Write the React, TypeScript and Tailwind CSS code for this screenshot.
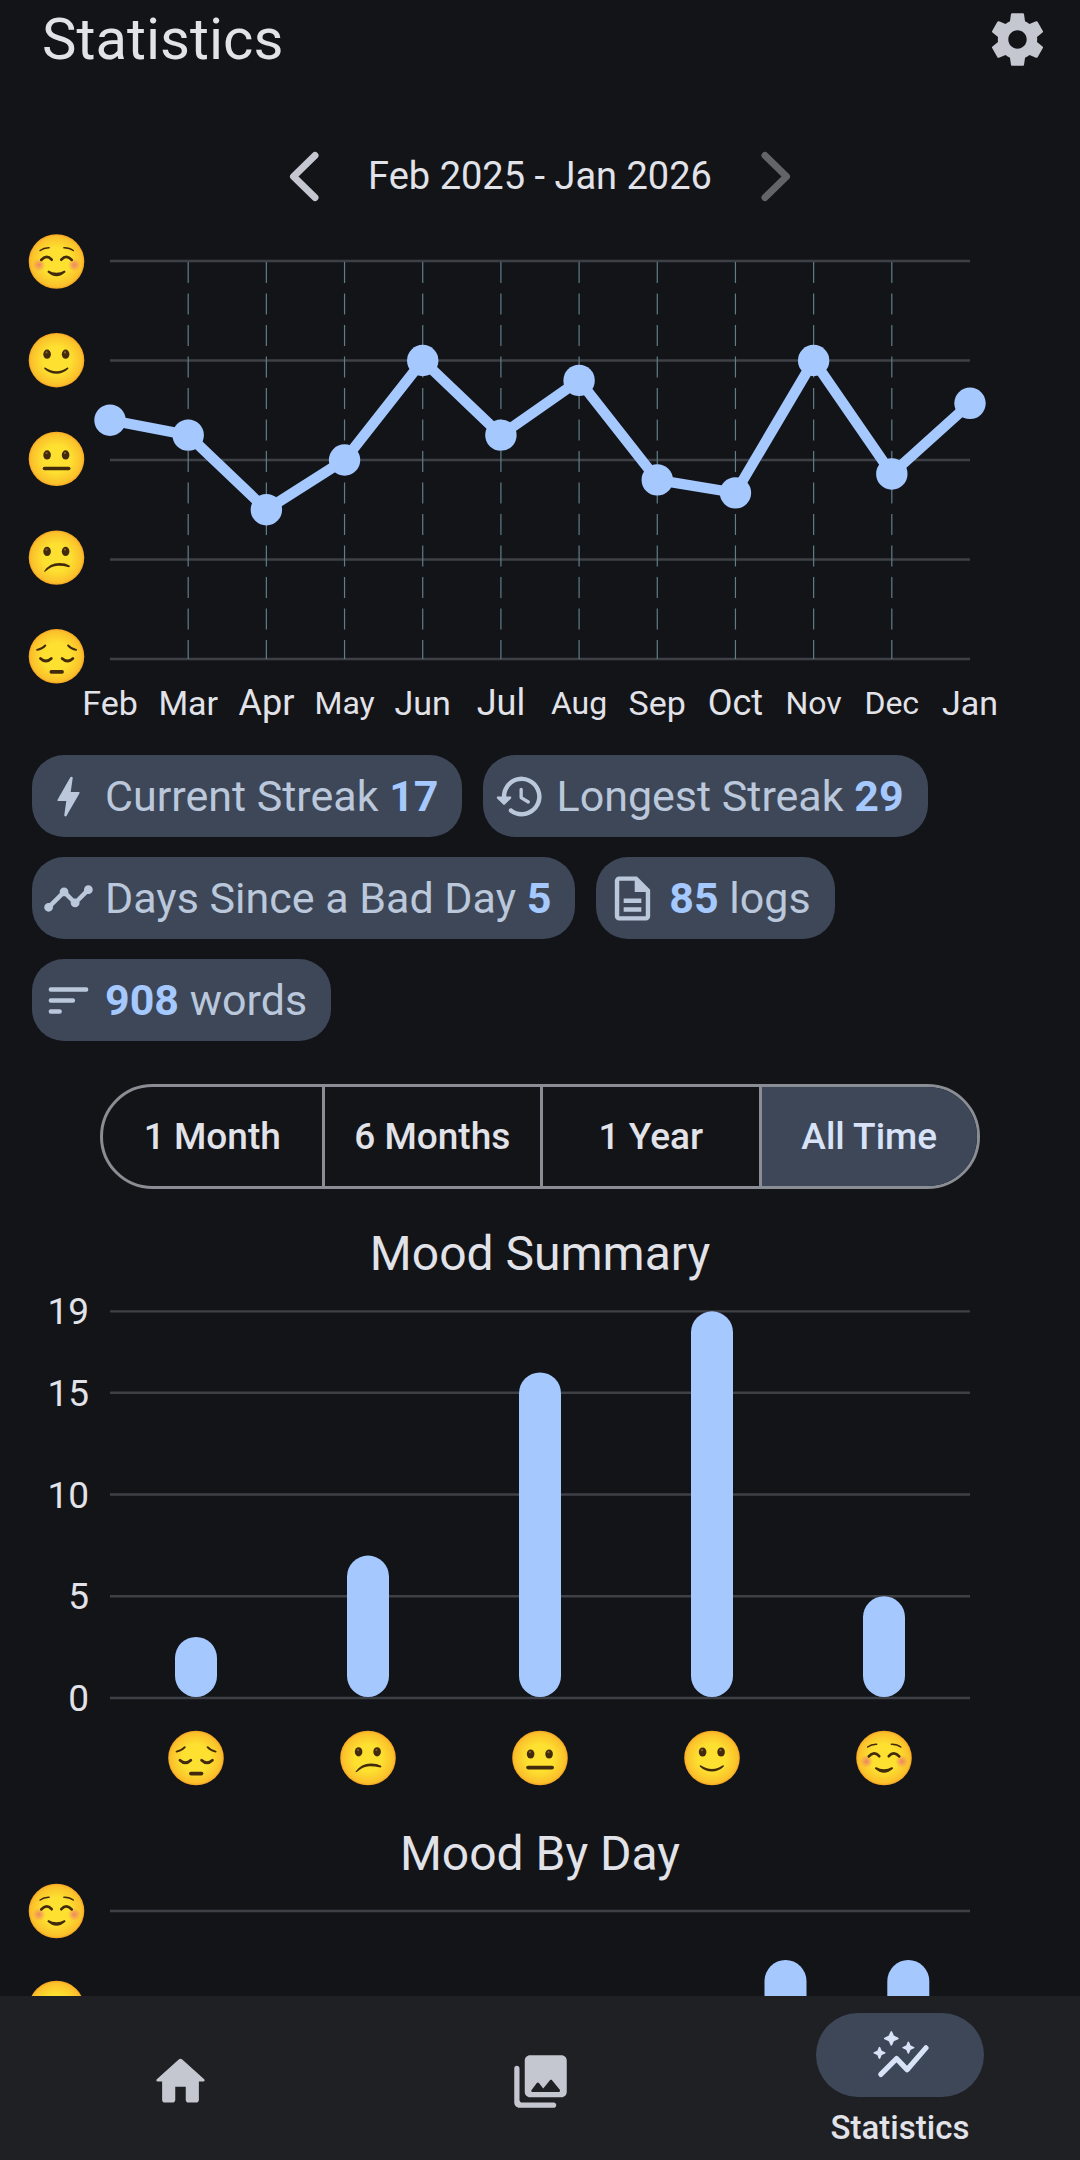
import React, { useState } from "react";

type Mood = "happy" | "smile" | "neutral" | "confused" | "sad";

interface FaceProps {
  mood: Mood;
  x: number;
  y: number;
}

const PRIMARY = "#a5c8ff";
const GRID = "#3e4045";
const INK = "#422b0d";

// plot area shared by every chart, in svg units
const LEFT = 110;
const RIGHT = 970;

const MONTHS = [
  { label: "Feb", value: 3.4, size: "text-[34px]" },
  { label: "Mar", value: 3.25, size: "text-[34px]" },
  { label: "Apr", value: 2.5, size: "text-[36px]" },
  { label: "May", value: 3, size: "text-[32px]" },
  { label: "Jun", value: 4, size: "text-[34px]" },
  { label: "Jul", value: 3.25, size: "text-[36px]" },
  { label: "Aug", value: 3.8, size: "text-[32px]" },
  { label: "Sep", value: 2.8, size: "text-[34px]" },
  { label: "Oct", value: 2.67, size: "text-[36px]" },
  { label: "Nov", value: 4, size: "text-[32px]" },
  { label: "Dec", value: 2.86, size: "text-[32px]" },
  { label: "Jan", value: 3.57, size: "text-[34px]" },
];

const MOODS: Mood[] = ["happy", "smile", "neutral", "confused", "sad"];

const SUMMARY: { mood: Mood; count: number }[] = [
  { mood: "sad", count: 3 },
  { mood: "confused", count: 7 },
  { mood: "neutral", count: 16 },
  { mood: "smile", count: 19 },
  { mood: "happy", count: 5 },
];

const RANGES = ["1 Month", "6 Months", "1 Year", "All Time"];

const ICONS = {
  settings:
    "M19.43 12.98c.04-.32.07-.64.07-.98s-.03-.66-.07-.98l2.11-1.65c.19-.15.24-.42.12-.64l-2-3.46c-.12-.22-.39-.3-.61-.22l-2.49 1c-.52-.4-1.08-.73-1.69-.98l-.38-2.65C14.46 2.18 14.25 2 14 2h-4c-.25 0-.46.18-.49.42l-.38 2.65c-.61.25-1.17.59-1.69.98l-2.49-1c-.23-.09-.49 0-.61.22l-2 3.46c-.13.22-.07.49.12.64l2.11 1.65c-.04.32-.07.65-.07.98s.03.66.07.98l-2.11 1.65c-.19.15-.24.42-.12.64l2 3.46c.12.22.39.3.61.22l2.49-1c.52.4 1.08.73 1.69.98l.38 2.65c.03.24.24.42.49.42h4c.25 0 .46-.18.49-.42l.38-2.65c.61-.25 1.17-.59 1.69-.98l2.49 1c.23.09.49 0 .61-.22l2-3.46c.12-.22.07-.49-.12-.64l-2.11-1.65zM12 15.5c-1.93 0-3.5-1.57-3.5-3.5s1.57-3.5 3.5-3.5 3.5 1.57 3.5 3.5-1.57 3.5-3.5 3.5z",
  bolt: "M10.67 21c-.35 0-.62-.31-.57-.66L11 14H7.5c-.88 0-.33-.75-.31-.78 1.26-2.23 3.15-5.53 5.65-9.93.1-.18.3-.29.5-.29.35 0 .62.31.57.66L13.01 10h3.51c.4 0 .62.19.4.66-3.29 5.74-5.2 9.09-5.75 10.05-.1.18-.29.29-.5.29z",
  history:
    "M13.26 3C8.17 2.86 4 6.95 4 12H2.21c-.45 0-.67.54-.35.85l2.79 2.8c.2.2.51.2.71 0l2.79-2.8c.31-.31.09-.85-.36-.85H6c0-3.9 3.18-7.05 7.1-7 3.72.05 6.85 3.18 6.9 6.9.05 3.91-3.1 7.1-7 7.1-1.61 0-3.1-.55-4.28-1.48-.4-.31-.96-.28-1.32.08-.42.42-.39 1.13.08 1.49C9 20.29 10.91 21 13 21c5.05 0 9.14-4.17 9-9.26-.13-4.69-4.05-8.61-8.74-8.74zm-.51 5c-.41 0-.75.34-.75.75v3.68c0 .35.19.68.49.86l3.12 1.85c.36.21.82.09 1.03-.26.21-.36.09-.82-.26-1.03l-2.88-1.71v-3.4c0-.4-.34-.74-.75-.74z",
  timeline:
    "M23 8c0 1.1-.9 2-2 2-.18 0-.35-.02-.51-.07l-3.56 3.55c.05.16.07.34.07.52 0 1.1-.9 2-2 2s-2-.9-2-2c0-.18.02-.36.07-.52l-2.55-2.55c-.16.05-.34.07-.52.07s-.36-.02-.52-.07l-4.55 4.56c.05.16.07.33.07.51 0 1.1-.9 2-2 2s-2-.9-2-2 .9-2 2-2c.18 0 .35.02.51.07l4.56-4.55C8.02 9.36 8 9.18 8 9c0-1.1.9-2 2-2s2 .9 2 2c0 .18-.02.36-.07.52l2.55 2.55c.16-.05.34-.07.52-.07s.36.02.52.07l3.55-3.56C19.02 8.35 19 8.18 19 8c0-1.1.9-2 2-2s2 .9 2 2z",
  document:
    "M8 16h8v2H8zm0-4h8v2H8zm6-10H6c-1.1 0-2 .9-2 2v16c0 1.1.89 2 1.99 2H18c1.1 0 2-.9 2-2V8l-6-6zm4 18H6V4h7v5h5v11z",
  sort: "M4 6h16a1 1 0 0 1 0 2H4a1 1 0 0 1 0-2zM4 11h10a1 1 0 0 1 0 2H4a1 1 0 0 1 0-2zM4 16h4a1 1 0 0 1 0 2H4a1 1 0 0 1 0-2z",
  home: "M10 19v-5h4v5c0 .55.45 1 1 1h3c.55 0 1-.45 1-1v-7h1.7c.46 0 .68-.57.33-.87L12.67 3.6c-.38-.34-.96-.34-1.34 0l-8.36 7.53c-.34.3-.13.87.33.87H5v7c0 .55.45 1 1 1h3c.55 0 1-.45 1-1z",
  gallery:
    "M22 16V4c0-1.1-.9-2-2-2H8c-1.1 0-2 .9-2 2v12c0 1.1.9 2 2 2h12c1.1 0 2-.9 2-2zm-10.6-3.47l1.63 2.18 2.58-3.22c.2-.25.58-.25.78 0l2.96 3.7c.26.33.03.81-.39.81H9c-.41 0-.65-.47-.4-.8l2-2.67c.2-.26.6-.26.8.01zM2 7v13c0 1.1.9 2 2 2h13c.55 0 1-.45 1-1s-.45-1-1-1H5c-.55 0-1-.45-1-1V7c0-.55-.45-1-1-1s-1 .45-1 1z",
};

const Icon = ({ name, className }: { name: keyof typeof ICONS; className: string }) => (
  <svg viewBox="0 0 24 24" fill="currentColor" className={className} aria-hidden="true">
    <path d={ICONS[name]} />
  </svg>
);

const Eyes = ({ y }: { y: number }) => (
  <>
    {[-9.4, 9.1].map((x) => (
      <g key={x}>
        <ellipse cx={x} cy={y} rx="3.8" ry="4.6" fill={INK} />
        <circle cx={x - 0.6} cy={y - 1.8} r="1.1" fill="#896024" />
      </g>
    ))}
  </>
);

const Face = ({ mood, x, y }: FaceProps) => (
  <g transform={`translate(${x} ${y})`} strokeLinecap="round" fill="none" stroke={INK}>
    <ellipse rx="27.8" ry="27.2" fill="url(#skin)" stroke="none" />
    <g stroke="none">
      {mood === "smile" && (
        <>
          <Eyes y={-6} />
          <path d="M-11.4 7.3Q-6 11 0 11Q6 11 10.9 7.3Q12.6 7 11.6 8.8Q6.5 13.6 0 13.6Q-7 13.6-12 8.8Q-13 7-11.4 7.3z" fill={INK} />
        </>
      )}
      {mood === "neutral" && <Eyes y={-4} />}
      {mood === "confused" && (
        <>
          <Eyes y={-6.2} />
          <path d="M-12.4 13.6Q-7 5.4 3 5.4Q9 5.4 13 7.8Q14.2 9.4 12.4 9.6Q6 8 1.4 8.2Q-5.6 8.8-10.6 13.4Q-12.4 14.8-12.4 13.6z" fill={INK} />
        </>
      )}
      {mood === "happy" && (
        <>
          <circle cx="-17.5" cy="3.4" r="6.4" fill="url(#blush)" />
          <circle cx="17.7" cy="3.4" r="6.4" fill="url(#blush)" />
        </>
      )}
    </g>
    {mood === "neutral" && <path d="M-12 9.6H12.2" strokeWidth="3.6" />}
    {mood === "happy" && (
      <>
        <path d="M-16.4-11Q-12.6-14-7.4-13.8M7.4-13.8Q13-14 16.8-11" strokeWidth="1.5" />
        <path d="M-15.2-1.6Q-10-7.6-4.8-1.8M4.8-1.8Q10-7.6 15.2-1.6" strokeWidth="2.7" />
        <path d="M-8.6 9.8Q0 17.6 8.6 9.8Q0 14.6-8.6 9.8z" fill={INK} strokeWidth="1.8" />
      </>
    )}
    {mood === "sad" && (
      <>
        <path d="M-19.4-6.4Q-14.4-7.2-11.2-10.8M11.6-10.8Q14.8-7.2 19.6-6.4" strokeWidth="1.9" />
        <path d="M-16 2.2Q-10.6 7.4-5.2 2.2M5.6 2.2Q11 7.4 16.4 2.2" strokeWidth="2.8" />
        <path d="M-5.2 15.6H5.6" strokeWidth="3.6" />
      </>
    )}
  </g>
);

const FaceDefs = () => (
  <defs>
    <radialGradient id="skin">
      <stop offset="0.5" stopColor="#fde030" />
      <stop offset="0.92" stopColor="#fbc02b" />
      <stop offset="1" stopColor="#f4a223" />
    </radialGradient>
    <radialGradient id="blush">
      <stop offset="0" stopColor="#ed7770" stopOpacity="0.85" />
      <stop offset="1" stopColor="#ed7770" stopOpacity="0" />
    </radialGradient>
  </defs>
);

const GridLine = ({ y }: { y: number }) => (
  <path d={`M${LEFT} ${y}H${RIGHT}`} stroke={GRID} strokeWidth="2.4" />
);

const TrendChart = () => {
  const step = (RIGHT - LEFT) / (MONTHS.length - 1);
  const points = MONTHS.map((m, i) => ({
    x: LEFT + i * step,
    y: 46 + (5 - m.value) * 99.5,
  }));

  return (
    <svg viewBox="0 0 1080 470" className="block w-full" role="img" aria-label="Average mood per month">
      <FaceDefs />
      {MOODS.map((mood, i) => (
        <g key={mood}>
          <GridLine y={46 + i * 99.5} />
          <Face mood={mood} x={56.5} y={46.5 + i * 98.7} />
        </g>
      ))}
      {points.slice(1, -1).map((p) => (
        <path key={p.x} d={`M${p.x} 47V444`} stroke="#607d8b" strokeWidth="1.2" strokeDasharray="21 10.5" />
      ))}
      <polyline
        points={points.map((p) => `${p.x},${p.y}`).join(" ")}
        fill="none"
        stroke={PRIMARY}
        strokeWidth="10.5"
      />
      {points.map((p) => (
        <circle key={p.x} cx={p.x} cy={p.y} r="15.7" fill={PRIMARY} />
      ))}
    </svg>
  );
};

const SummaryChart = () => {
  const zero = 416;
  const unit = 20.35;
  const slot = (RIGHT - LEFT) / SUMMARY.length;

  return (
    <svg viewBox="0 0 1080 518" className="block w-full" role="img" aria-label="Number of days per mood">
      {[19, 15, 10, 5, 0].map((n) => (
        <g key={n}>
          <GridLine y={zero - n * unit} />
          <text x="89" y={zero + 13 - n * unit} textAnchor="end" fontSize="37" fill="#e2e2e9">
            {n}
          </text>
        </g>
      ))}
      {SUMMARY.map(({ mood, count }, i) => {
        const x = LEFT + (i + 0.5) * slot;
        return (
          <g key={mood}>
            <rect x={x - 21} y={zero - count * unit} width="42" height={count * unit - 1} rx="21" fill={PRIMARY} />
            <Face mood={mood} x={x} y={476} />
          </g>
        );
      })}
    </svg>
  );
};

const DayChart = () => (
  <svg viewBox="0 0 1080 240" className="block w-full" role="img" aria-label="Average mood per weekday">
    {MOODS.slice(0, 2).map((mood, i) => (
      <g key={mood}>
        <GridLine y={29 + i * 99.5} />
        <Face mood={mood} x={56.5} y={29 + i * 97} />
      </g>
    ))}
    {[785.5, 908.3].map((x) => (
      <rect key={x} x={x - 21} y="78" width="42" height="300" rx="21" fill={PRIMARY} />
    ))}
  </svg>
);

const Chip = ({ icon, children }: { icon: keyof typeof ICONS; children: React.ReactNode }) => (
  <div className="flex h-[82px] items-center gap-[10px] rounded-[32px] bg-[#3d4758] pl-[10px] pr-[24px] text-[43px] text-[#bbc7db]">
    <Icon name={icon} className="size-[53px]" />
    <span>{children}</span>
  </div>
);

const Value = ({ children }: { children: React.ReactNode }) => (
  <b className="font-bold text-[#a5c8ff]">{children}</b>
);

export default function App() {
  const [range, setRange] = useState("All Time");

  return (
    <div className="flex h-screen flex-col bg-[#121418] font-['Roboto',sans-serif] text-[#e2e2e9]">
      <main className="min-h-0 flex-1 overflow-hidden">
        <header className="flex h-[78px] items-center justify-between pl-[42px] pr-[31px]">
          <h1 className="text-[58px] leading-[76px]">Statistics</h1>
          <button type="button" aria-label="Settings" className="text-[#c4c6d0]">
            <Icon name="settings" className="size-[63px]" />
          </button>
        </header>

        <div className="mt-[60px] flex h-[77px] items-center justify-center gap-[35px]">
          <button type="button" aria-label="Previous year" className="text-[#c4c6d0]">
            <svg viewBox="0 0 63 63" className="size-[63px]" fill="none" stroke="currentColor" strokeWidth="7" strokeLinecap="round" strokeLinejoin="round">
              <path d="M45 10.5L23.5 31.5L45 52.5" />
            </svg>
          </button>
          <p className="text-[38px]">Feb 2025 - Jan 2026</p>
          <button type="button" aria-label="Next year" disabled className="text-[#626468]">
            <svg viewBox="0 0 63 63" className="size-[63px]" fill="none" stroke="currentColor" strokeWidth="7" strokeLinecap="round" strokeLinejoin="round">
              <path d="M18 10.5L39.5 31.5L18 52.5" />
            </svg>
          </button>
        </div>

        <section>
          <TrendChart />
          <div className="grid grid-cols-12 px-[71px]">
            {MONTHS.map((m) => (
              <span key={m.label} className={`text-center leading-[36px] ${m.size}`}>
                {m.label}
              </span>
            ))}
          </div>
        </section>

        <section className="mt-[34px] flex flex-wrap gap-x-[21px] gap-y-[20px] px-[32px]">
          <Chip icon="bolt">
            Current Streak <Value>17</Value>
          </Chip>
          <Chip icon="history">
            Longest Streak <Value>29</Value>
          </Chip>
          <Chip icon="timeline">
            Days Since a Bad Day <Value>5</Value>
          </Chip>
          <Chip icon="document">
            <Value>85</Value> logs
          </Chip>
          <Chip icon="sort">
            <Value>908</Value> words
          </Chip>
        </section>

        <div className="mx-[100px] mt-[43px] grid h-[105px] grid-cols-4 overflow-hidden rounded-full border-[3px] border-[#8a8d94]">
          {RANGES.map((r) => (
            <button
              key={r}
              type="button"
              aria-pressed={range === r}
              onClick={() => setRange(r)}
              className={`border-[#8a8d94] text-[37px] font-medium not-first:border-l-[3px] ${
                range === r ? "bg-[#3d4758] text-[#d9e3f8]" : ""
              }`}
            >
              {r}
            </button>
          ))}
        </div>

        <section className="mt-[37px]">
          <h2 className="text-center text-[48px] leading-[56px]">Mood Summary</h2>
          <SummaryChart />
        </section>

        <section className="mt-[26px]">
          <h2 className="text-center text-[48px] leading-[56px]">Mood By Day</h2>
          <DayChart />
        </section>
      </main>

      <nav className="grid h-[164px] shrink-0 grid-cols-3 bg-[#1f2024] text-[#c4c6d0]">
        <a href="#home" aria-label="Home" className="flex items-center justify-center pt-[6px]">
          <Icon name="home" className="size-[63px]" />
        </a>
        <a href="#gallery" aria-label="Gallery" className="flex items-center justify-center pt-[6px]">
          <Icon name="gallery" className="size-[63px]" />
        </a>
        <a href="#statistics" aria-current="page" className="flex flex-col items-center pt-[17px]">
          <span className="flex h-[84px] w-[168px] items-center justify-center rounded-full bg-[#3d4758] text-[#d9e3f8]">
            <svg viewBox="0 0 24 24" className="size-[63px]" stroke="currentColor" strokeLinecap="round" strokeLinejoin="round" aria-hidden="true">
              <path d="M4.5 19.2L10.5 13.2L14.5 17.4L21.7 9.1" fill="none" strokeWidth="2" />
              <path
                d="M8.5 3l.8 1.7 1.7.8-1.7.8-.8 1.7-.8-1.7-1.7-.8 1.7-.8zM15 7l.6 1.4 1.4.6-1.4.6-.6 1.4-.6-1.4-1.4-.6 1.4-.6zM4 9l.6 1.4 1.4.6-1.4.6-.6 1.4-.6-1.4-1.4-.6 1.4-.6z"
                fill="currentColor"
                strokeWidth="0.6"
              />
            </svg>
          </span>
          <span className="mt-[12px] text-[33px] font-medium leading-[38px] text-[#e2e2e9]">Statistics</span>
        </a>
      </nav>
    </div>
  );
}
